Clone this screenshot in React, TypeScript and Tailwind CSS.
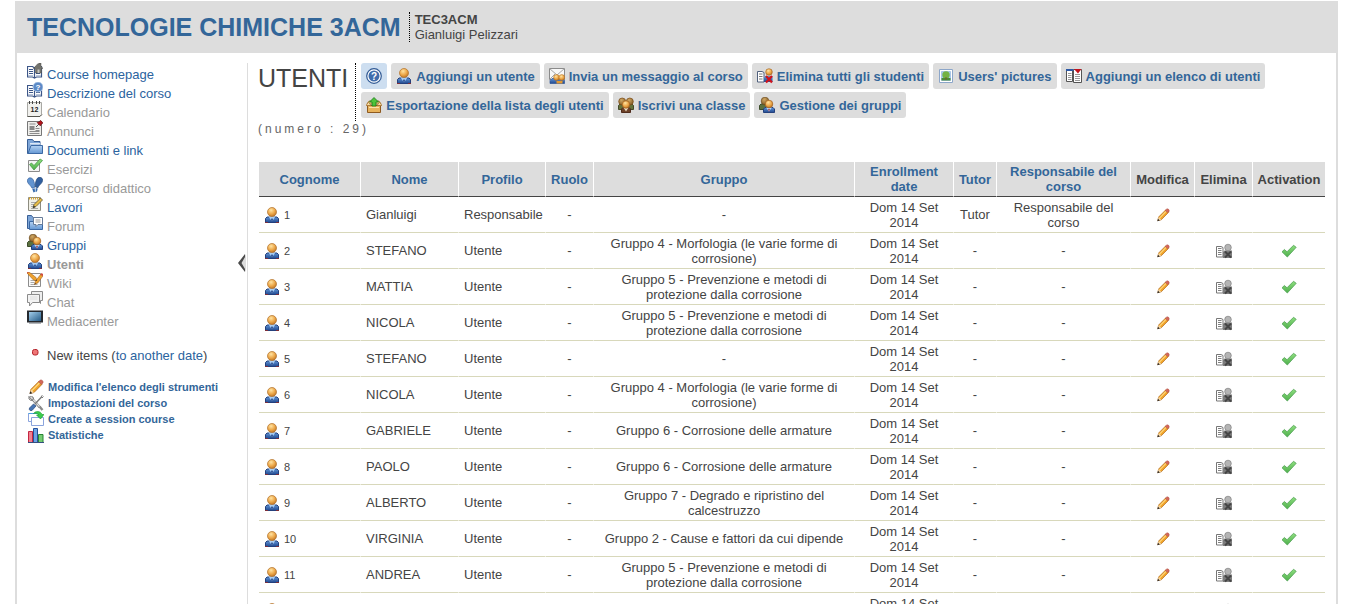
import React from "react";

type IconProps = { className?: string };

function Svg({ children, className = "size-4" }: { children: React.ReactNode; className?: string }) {
  return (
    <svg viewBox="0 0 16 16" className={`${className} shrink-0`} aria-hidden="true">
      {children}
    </svg>
  );
}

function Gradients() {
  return (
    <svg className="absolute size-0" aria-hidden="true">
      <defs>
        <radialGradient id="head" cx="0.4" cy="0.3" r="0.8">
          <stop offset="0" stopColor="#ffe3a1" />
          <stop offset="0.5" stopColor="#eeaa4c" />
          <stop offset="1" stopColor="#b5691c" />
        </radialGradient>
        <radialGradient id="olive" cx="0.4" cy="0.3" r="0.8">
          <stop offset="0" stopColor="#d0a763" />
          <stop offset="1" stopColor="#7a5420" />
        </radialGradient>
        <linearGradient id="coat" x1="0" y1="0" x2="0" y2="1">
          <stop offset="0" stopColor="#5d93d6" />
          <stop offset="1" stopColor="#22498f" />
        </linearGradient>
        <linearGradient id="folder" x1="0" y1="0" x2="0" y2="1">
          <stop offset="0" stopColor="#b5d3f3" />
          <stop offset="1" stopColor="#6497d3" />
        </linearGradient>
        <linearGradient id="screen" x1="0" y1="0" x2="1" y2="1">
          <stop offset="0" stopColor="#a4cfec" />
          <stop offset="1" stopColor="#245a86" />
        </linearGradient>
        <linearGradient id="tick" x1="0" y1="0" x2="0" y2="1">
          <stop offset="0" stopColor="#8ede7e" />
          <stop offset="1" stopColor="#4fb04d" />
        </linearGradient>
      </defs>
    </svg>
  );
}

function UserIcon({ className }: IconProps) {
  return (
    <Svg className={className}>
      <path d="M1.500 15.500v-4l1.500-1.500h10l1.500 1.500v4z" fill="url(#coat)" stroke="#24407c" />
      <path d="M4.500 9.500h7L8 14.500z" fill="#a9cdf2" />
      <path d="M8 11l1 1.500-1 3-1-3z" fill="#27488b" />
      <path d="M1 15.500h3M12 15.500h3" stroke="#7c2f3c" />
      <circle cx="8" cy="5" r="4.500" fill="url(#head)" stroke="#b0702a" strokeWidth="0.700" />
    </Svg>
  );
}

function GroupIcon({ className }: IconProps) {
  return (
    <Svg className={className}>
      <path d="M0.500 12.500v-4l1.500-1.500h7v5.500z" fill="#5b7040" stroke="#3d4d2b" />
      <circle cx="6" cy="4" r="3.800" fill="url(#olive)" stroke="#6c4a1c" strokeWidth="0.700" />
      <path d="M4.500 15.500v-3.500l1.500-1.500h8l1.500 1.500v3.500z" fill="url(#coat)" stroke="#24407c" />
      <path d="M7 10.500h6L10 14.500z" fill="#b9d8f5" />
      <path d="M10 11.500l.7 1-.7 2.500-.7-2.500z" fill="#a32a2f" />
      <circle cx="10" cy="7" r="3.800" fill="url(#head)" stroke="#a0601e" strokeWidth="0.700" />
    </Svg>
  );
}

function ClassIcon() {
  return (
    <Svg>
      <path d="M.5 12.500v-4l1.500-1.500h12l1.500 1.500v4z" fill="#65733c" stroke="#454b2a" />
      <circle cx="4.200" cy="4.500" r="3.500" fill="url(#olive)" stroke="#7b4a16" strokeWidth="0.700" />
      <circle cx="11.800" cy="4.500" r="3.500" fill="url(#olive)" stroke="#7b4a16" strokeWidth="0.700" />
      <path d="M3.500 15.500v-3.500l1.500-1.500h6l1.500 1.500v3.500z" fill="#6d4128" stroke="#502c1c" />
      <path d="M5.500 10.500h5L8 14.500z" fill="#e8d9be" />
      <circle cx="8" cy="7.500" r="3.700" fill="url(#head)" stroke="#a0601e" strokeWidth="0.700" />
    </Svg>
  );
}

function BookPages({ color = "#3c5688" }: { color?: string }) {
  return (
    <>
      <path d="M.5 3.500h5l2 1.500 2-1.500h5v10.500H9.500l-2 1-2-1H.5z" fill="#fff" stroke={color} strokeWidth="1.200" />
      <path d="M7.500 5v10" stroke={color} strokeWidth="1.200" />
      <path d="M2 6.500h4M2 8.500h4M2 10.500h4M9 6.500h4M9 8.500h4M9 10.500h4" stroke={color} />
      <path d="M1 12.500h5M9 12.500h5" stroke="#b9c6dc" />
    </>
  );
}

function HomeBookIcon() {
  return (
    <Svg>
      <BookPages />
      <path d="M6.500 5.500L11 .5l1 .8V0h2v3l2 2.500h-1.500V10H8.500V5.500z" fill="#73736d" stroke="#4f4f4a" strokeWidth="0.500" />
      <path d="M10.500 6.500h2V10h-2z" fill="#c6c6c0" />
    </Svg>
  );
}

function InfoBookIcon() {
  return (
    <Svg>
      <BookPages />
      <circle cx="11" cy="5" r="5" fill="#5c8ac7" stroke="#bcd2ec" strokeWidth="0.800" />
      <text x="11" y="8" textAnchor="middle" fontSize="8" fontWeight="700" fill="#fff" className="font-['Liberation_Sans',sans-serif]">?</text>
    </Svg>
  );
}

function CalendarIcon() {
  return (
    <Svg>
      <path d="M.5 1.500h14v12l-2 2H.5z" fill="#f1f1ee" stroke="#a8a8a4" />
      <path d="M.5 15.500h12.500l2-2" fill="none" stroke="#55554f" />
      <path d="M2.500 0v3M5.500 0v3M9.500 0v3M12.500 0v3" stroke="#444" />
      <text x="7.500" y="11" textAnchor="middle" fontSize="7" fontWeight="700" fill="#222" className="font-['Liberation_Sans',sans-serif]">12</text>
    </Svg>
  );
}

function NewsIcon() {
  return (
    <Svg>
      <path d="M.5 1.500h14v14H.5z" fill="#efefec" stroke="#777" />
      <path d="M2.500 4h6M2.500 13.500h10M8.500 8.500h4M8.500 10.500h4M2.500 11.500h10" stroke="#8c8c8c" />
      <path d="M2.500 6h5v4h-5z" fill="#888" />
      <path d="M9 7l3-3" stroke="#555" />
      <path d="M10 2.500l3.500 3.500.5-1.500L16 3 13.500 .3 12 2z" fill="#b3141c" stroke="#5e0b10" strokeWidth="0.600" />
    </Svg>
  );
}

function FolderIcon() {
  return (
    <Svg>
      <path d="M.5 14.500V.5h5l1.500 2h6v12z" fill="#7ea6d8" stroke="#385f96" />
      <path d="M3 4.500h10M3 6h10" stroke="#dce8f6" />
      <path d="M1 14.500l3-8h11.500v8z" fill="url(#folder)" stroke="#3b69a5" />
    </Svg>
  );
}

function ExerciseIcon() {
  return (
    <Svg>
      <path d="M1.500 2.500h11v11h-11z" fill="#f4f4f4" stroke="#8c8c8c" />
      <path d="M2.500 6.500l2-1.500L7 7.500 13 1l2.500 1.500L7 12z" fill="url(#tick)" stroke="#3c8f38" strokeWidth="0.700" />
    </Svg>
  );
}

function StepsIcon() {
  return (
    <Svg>
      <path d="M.6 2.500C1.500.3 5 .2 6.300 3c1 2.200 1.700 5 1.200 7.500L5 11.200C3.800 8-.6 6.500.6 2.500z" fill="#6194d1" stroke="#3a639f" strokeWidth="0.700" />
      <path d="M15.400 2C14.500-.2 11-.3 9.700 2.300 8.600 4.600 8 7.500 8.400 10l2.500.7C12 7.500 16.500 6 15.400 2z" fill="#315f9f" stroke="#234878" strokeWidth="0.700" />
      <path d="M5.300 12l2.400-.7.300 3.400-1.500.8zM8.700 11l2 .5-.7 3-1.500.5z" fill="#356baf" />
    </Svg>
  );
}

function WorkIcon() {
  return (
    <Svg>
      <path d="M1.500 1.500h12v13h-12z" fill="#f1f0e6" stroke="#8d8c80" />
      <path d="M2 2.500h11" stroke="#dca62d" strokeWidth="2" strokeDasharray="1 1" />
      <path d="M4 6.500h6M4 8.500h4M4 10.500h3M4 12.500h7" stroke="#aaa" />
      <path d="M6 12l1-3.500L13.500 2l2 2L9 10.500z" fill="#e8bd47" stroke="#5f5634" strokeWidth="0.800" />
      <path d="M6 12l.7-2.400L8.500 11z" fill="#333" />
    </Svg>
  );
}

function ForumIcon() {
  return (
    <Svg>
      <path d="M.5 13.500V.5h4l1.500 2h6v11z" fill="#7ea6d8" stroke="#385f96" />
      <path d="M2.500 14.500v-8h13v8z" fill="url(#folder)" stroke="#3b69a5" />
      <path d="M6.500 2.500h9v7H11l-2 2v-2H6.500z" fill="#fff" stroke="#667b98" />
      <path d="M8.500 5h5M8.500 7h5" stroke="#999" />
    </Svg>
  );
}

function PencilIcon({ className }: IconProps) {
  return (
    <Svg className={className}>
      <path d="M2 14.500l1-4.200L11.300 2l3 3L6 13.500z" fill="#f2a52a" stroke="#ad661a" strokeWidth="0.800" />
      <path d="M4 11.500L12.300 3" stroke="#ffda81" strokeWidth="1.200" />
      <path d="M2 14.500l1-4.200L6 13.500z" fill="#f3d6a6" />
      <path d="M1.500 15l.8-2.700 2 1.900z" fill="#2a2a2a" />
      <path d="M10.500 2.800l1.800-1.700c1.500-.7 3.300 1.100 2.700 2.600L13.300 5.500z" fill="#d3685b" stroke="#a5473f" strokeWidth="0.500" />
    </Svg>
  );
}

function WikiIcon() {
  return (
    <Svg>
      <path d="M1.500 1.500h12v13h-12z" fill="#fafafa" stroke="#8c8c8c" />
      <path d="M3.500 8.500h5M3.500 10.500h4M3.500 12.500h7" stroke="#aaa" />
      <path d="M0 1l2-1L9 5.500 10 9 6.500 8z" fill="#eea32f" stroke="#a96016" strokeWidth="0.600" />
      <path d="M7.500 12.500l1-3.500L14 2l2 1.800-5 7z" fill="#eea32f" stroke="#a96016" strokeWidth="0.600" />
      <path d="M13.300 3L14.500 1 16 2v2zM0 0h2L.5 1.500z" fill="#cf4c40" />
      <path d="M10 9L8.300 8.500l1.200-1zM7.500 12.500l.5-1.600 1 .6z" fill="#333" />
    </Svg>
  );
}

function ChatIcon() {
  return (
    <Svg>
      <path d="M4.500 .5h11v9h-2v3l-3-3h-6z" fill="#eee" stroke="#8b8b8b" />
      <path d="M.5 3.500h12v8H5.500l-3 3.500v-3.500h-2z" fill="#f3f3f3" stroke="#8b8b8b" />
      <path d="M3 6h7.500M3 8h7.500" stroke="#ddd" />
    </Svg>
  );
}

function MediaIcon() {
  return (
    <Svg>
      <path d="M0 .5h16v12H0z" fill="#25292e" />
      <path d="M2 2h12v9H2z" fill="url(#screen)" />
      <path d="M2 13h12" stroke="#6a7078" />
    </Svg>
  );
}

function ToolsIcon() {
  return (
    <Svg>
      <path d="M2 1.500l10 11" stroke="#6f6f6f" strokeWidth="2.600" />
      <path d="M2.500 1.800l10 11" stroke="#e2e2e2" strokeWidth="1.300" />
      <path d="M1 1v3l2 1.500 2-.7L5.500 3 4 1.200" fill="none" stroke="#777" />
      <path d="M11.500 11.500l3 3.500" stroke="#8b8b8b" strokeWidth="2.400" />
      <path d="M7 9l7-7.500" stroke="#777" strokeWidth="1.400" />
      <path d="M13 1.500l1.500-1M14 3l1.500-1.500" stroke="#777" />
      <path d="M1.500 13L5.500 9 8 11l-4 4.500c-1.500.5-3.500-.5-2.500-2.500z" fill="#4574b4" stroke="#244475" strokeWidth="0.700" />
    </Svg>
  );
}

function SessionIcon() {
  return (
    <Svg>
      <path d="M.5 2.500h10v8H.5z" fill="#fff" stroke="#8ba4dd" />
      <path d="M3.500 6.500h12v8h-12z" fill="#fff" stroke="#8ba4dd" />
      <path d="M.5 2.500h10" stroke="#4b9fe0" />
      <path d="M5.500 2.500C7.500-.3 12.500-.5 14 3.500h2L12.500 8 8.500 4h2.200C9.500 2.300 7.500 2 5.500 2.500z" fill="#3bcc4c" stroke="#1d9b33" strokeWidth="0.600" />
    </Svg>
  );
}

function StatsIcon() {
  return (
    <Svg>
      <path d="M.5 4.500h4v11h-4z" fill="#ef8190" stroke="#c42742" />
      <path d="M5.500 1.500h4v14h-4z" fill="#6da3e4" stroke="#24519b" />
      <path d="M10.500 7.500h4.500v8h-4.500z" fill="#75cc72" stroke="#288434" />
      <path d="M0 15.500h16" stroke="#354e80" />
    </Svg>
  );
}

function HelpIcon() {
  return (
    <Svg>
      <circle cx="8" cy="8" r="7.300" fill="#fff" stroke="#315a95" strokeWidth="1.200" />
      <circle cx="8" cy="8" r="5.500" fill="#3f6cab" />
      <text x="8" y="11.500" textAnchor="middle" fontSize="10" fontWeight="700" fill="#fff" className="font-['Liberation_Sans',sans-serif]">?</text>
    </Svg>
  );
}

function MessageIcon() {
  return (
    <Svg>
      <path d="M.5 .5h15v11H.5z" fill="#f8f8f8" stroke="#8b8b8b" />
      <path d="M.5 .5L8 7l7.500-6.500M.5 11.500L6 6" fill="none" stroke="#a5a5a5" />
      <path d="M1 15.500v-3l2-2h11l1.500 2v3z" fill="url(#coat)" stroke="#2d5596" strokeWidth="0.700" />
      <circle cx="7.500" cy="9.500" r="2.900" fill="url(#head)" stroke="#b06c1e" strokeWidth="0.500" />
      <circle cx="12.800" cy="9.500" r="2.900" fill="url(#head)" stroke="#b06c1e" strokeWidth="0.500" />
      <path d="M7.500 13h6v2.500h-6z" fill="#e59a30" />
    </Svg>
  );
}

function UnsubscribeIcon() {
  return (
    <Svg>
      <path d="M.5 3.500h4.500l2 1V14H.5z" fill="#fff" stroke="#50607c" />
      <path d="M2 6h3.500M2 8.500h3.500M2 11h3.500" stroke="#777" />
      <path d="M7 14V9.500l1.500-1.500h7v6z" fill="url(#coat)" />
      <circle cx="12" cy="4" r="3.300" fill="url(#head)" stroke="#a0601e" strokeWidth="0.600" />
      <path d="M9 8l6 6.500M15 8l-6 6.500" stroke="#d0111b" strokeWidth="2.200" />
    </Svg>
  );
}

function UnsubscribeGrayIcon() {
  return (
    <Svg>
      <path d="M.5 3.500h4.500l2 1V14H.5z" fill="#fff" stroke="#777" />
      <path d="M2 5.500h3.500M2 7.500h3.500M2 9.500h3.500M2 11.500h3.500" stroke="#808080" />
      <path d="M7 15V9l1.500-1.500H16V15z" fill="#7d7d7d" />
      <circle cx="12" cy="4.500" r="3.300" fill="#b4b4b4" stroke="#808080" strokeWidth="0.700" />
      <path d="M9 8.500l6 6M15 8.500l-6 6" stroke="#454545" strokeWidth="2" />
    </Svg>
  );
}

function PictureIcon() {
  return (
    <Svg>
      <path d="M1.500 1.500h13v13h-13z" fill="#fff" stroke="#8ca6c9" />
      <path d="M3.500 3.500h9v9h-9z" fill="#a9cdf0" stroke="#8aaedb" strokeWidth="0.600" />
      <circle cx="8" cy="7" r="3.700" fill="#74b244" />
      <path d="M3.500 12.500V10h9v2.500z" fill="#4e8c39" />
      <path d="M7.500 9h1v2.500h-1z" fill="#7d5a2c" />
    </Svg>
  );
}

function ImportListIcon() {
  return (
    <Svg>
      <path d="M.5 1.500h6v12h-6zM7.500 1.500h8v13h-8z" fill="#fff" stroke="#555" />
      <path d="M0 2h7.500" stroke="#2c58a5" strokeWidth="2" />
      <path d="M2 5.500h3.500M2 7.500h3.500M2 9.500h3.500M2 11.500h3.500M9 6.500h5M9 8.500h5M9 10.500h5M9 12.500h5" stroke="#999" />
      <path d="M8 1h7.500L12 5.500z" fill="#c3121c" />
    </Svg>
  );
}

function ExportIcon() {
  return (
    <Svg>
      <path d="M1 7L3 4h10l2 3z" fill="#f3d188" stroke="#a16c28" strokeWidth="0.800" />
      <path d="M1.500 8.500h13v7h-13z" fill="#e8b35c" stroke="#8e5a20" />
      <path d="M0 8.500L2.500 5 5 8.500zM16 8.500L13.500 5 11 8.500z" fill="#f9dfa3" stroke="#a16c28" strokeWidth="0.700" />
      <path d="M3 10.500h10" stroke="#fbe2ae" />
      <path d="M8 .5l4.500 4.500H10v4H6V5H3.500z" fill="#4fc43a" stroke="#1b7a1b" strokeWidth="0.800" />
    </Svg>
  );
}

function CheckIcon() {
  return (
    <Svg>
      <path d="M1 8.800l2.400-2.300L6 8.800l6.500-6.500L15.200 4.300 6.300 14z" fill="url(#tick)" stroke="#52a257" strokeWidth="0.800" />
    </Svg>
  );
}

const tools = [
  { label: "Course homepage", icon: HomeBookIcon, tone: "text-[#2b639e]" },
  { label: "Descrizione del corso", icon: InfoBookIcon, tone: "text-[#2b639e]" },
  { label: "Calendario", icon: CalendarIcon, tone: "text-[#999]" },
  { label: "Annunci", icon: NewsIcon, tone: "text-[#999]" },
  { label: "Documenti e link", icon: FolderIcon, tone: "text-[#2b639e]" },
  { label: "Esercizi", icon: ExerciseIcon, tone: "text-[#999]" },
  { label: "Percorso didattico", icon: StepsIcon, tone: "text-[#999]" },
  { label: "Lavori", icon: WorkIcon, tone: "text-[#2b639e]" },
  { label: "Forum", icon: ForumIcon, tone: "text-[#999]" },
  { label: "Gruppi", icon: GroupIcon, tone: "text-[#2b639e]" },
  { label: "Utenti", icon: UserIcon, tone: "font-bold text-[#999]" },
  { label: "Wiki", icon: WikiIcon, tone: "text-[#999]" },
  { label: "Chat", icon: ChatIcon, tone: "text-[#999]" },
  { label: "Mediacenter", icon: MediaIcon, tone: "text-[#999]" },
];

const adminLinks = [
  { label: "Modifica l'elenco degli strumenti", icon: PencilIcon },
  { label: "Impostazioni del corso", icon: ToolsIcon },
  { label: "Create a session course", icon: SessionIcon },
  { label: "Statistiche", icon: StatsIcon },
];

const commands = [
  { label: "Aggiungi un utente", icon: UserIcon },
  { label: "Invia un messaggio al corso", icon: MessageIcon },
  { label: "Elimina tutti gli studenti", icon: UnsubscribeIcon },
  { label: "Users' pictures", icon: PictureIcon },
  { label: "Aggiungi un elenco di utenti", icon: ImportListIcon },
  { label: "Esportazione della lista degli utenti", icon: ExportIcon },
  { label: "Iscrivi una classe", icon: ClassIcon },
  { label: "Gestione dei gruppi", icon: GroupIcon },
];

const columns = [
  { label: "Cognome", width: "w-[102px]", sortable: true },
  { label: "Nome", width: "w-[98px]", sortable: true },
  { label: "Profilo", width: "w-[87px]", sortable: true },
  { label: "Ruolo", width: "w-12", sortable: true },
  { label: "Gruppo", width: "", sortable: true },
  { label: "Enrollment date", width: "w-[99px]", sortable: true },
  { label: "Tutor", width: "w-[43px]", sortable: true },
  { label: "Responsabile del corso", width: "w-[134px]", sortable: true },
  { label: "Modifica", width: "w-16", sortable: false },
  { label: "Elimina", width: "w-[58px]", sortable: false },
  { label: "Activation", width: "w-[72px]", sortable: false },
];

const G2 = "Gruppo 2 - Cause e fattori da cui dipende";
const G4 = "Gruppo 4 - Morfologia (le varie forme di corrosione)";
const G5 = "Gruppo 5 - Prevenzione e metodi di protezione dalla corrosione";
const G6 = "Gruppo 6 - Corrosione delle armature";
const G7 = "Gruppo 7 - Degrado e ripristino del calcestruzzo";

const users = [
  { name: "Gianluigi", group: "-", manager: true },
  { name: "STEFANO", group: G4, manager: false },
  { name: "MATTIA", group: G5, manager: false },
  { name: "NICOLA", group: G5, manager: false },
  { name: "STEFANO", group: "-", manager: false },
  { name: "NICOLA", group: G4, manager: false },
  { name: "GABRIELE", group: G6, manager: false },
  { name: "PAOLO", group: G6, manager: false },
  { name: "ALBERTO", group: G7, manager: false },
  { name: "VIRGINIA", group: G2, manager: false },
  { name: "ANDREA", group: G5, manager: false },
  { name: "", group: "", manager: false },
];

function Sidebar() {
  return (
    <aside className="relative w-[231px] shrink-0 border-r border-[#ddd] pl-[10px]">
      <nav aria-label="Strumenti">
        <ul>
          {tools.map(({ label, icon: Icon, tone }) => (
            <li key={label}>
              <a href="#" className={`flex h-[19px] items-start gap-1 ${tone}`}>
                <Icon />
                <span className="self-end">{label}</span>
              </a>
            </li>
          ))}
        </ul>
      </nav>
      <p className="mt-[19px] flex items-start gap-1">
        <svg viewBox="0 0 16 16" className="size-4 shrink-0" aria-hidden="true">
          <rect x="5.500" y="1.500" width="5.500" height="5.500" rx="2" fill="#ef7676" stroke="#b5242c" />
        </svg>
        <span>
          New items (<a href="#" className="text-[#2b639e]">to another date</a>)
        </span>
      </p>
      <ul className="mt-[15px] text-[11px] leading-4 font-bold text-[#336699]">
        {adminLinks.map(({ label, icon: Icon }) => (
          <li key={label}>
            <a href="#" className="flex items-center gap-1 pl-px">
              <Icon />
              {label}
            </a>
          </li>
        ))}
      </ul>
      <button type="button" aria-label="Nascondi menu" className="absolute top-[190px] right-0">
        <svg viewBox="0 0 10 20" className="h-5 w-[10px]" aria-hidden="true">
          <path d="M9 1v18L2 10z" fill="#ddd" />
          <path d="M8 1L1 10l7 9v-3L4.500 10 8 4z" fill="#4a4a4a" />
        </svg>
      </button>
    </aside>
  );
}

function UsersTable() {
  const cell = "border-r border-b border-r-white border-b-[#d8d8bb] px-[5px] last:border-r-0";
  return (
    <div className="mt-6 pl-px">
      <table className="w-full table-fixed border-separate border-spacing-0 text-center">
        <thead>
          <tr className="h-[35px]">
            {columns.map(({ label, width, sortable }) => (
              <th
                key={label}
                scope="col"
                className={`${width} border-r border-b border-r-white border-b-[#444] bg-[#ddd] last:border-r-0`}
              >
                {sortable ? <a href="#" className="block text-[#336699]">{label}</a> : label}
              </th>
            ))}
          </tr>
        </thead>
        <tbody>
          {users.map(({ name, group, manager }, i) => (
            <tr key={i} className="h-9">
              <td className={cell}>
                <div className="flex items-end gap-1 text-[11px]">
                  <UserIcon />
                  {i + 1}
                </div>
              </td>
              <td className={`${cell} text-left`}>{name}</td>
              <td className={`${cell} text-left`}>{manager ? "Responsabile" : "Utente"}</td>
              <td className={cell}>-</td>
              <td className={cell}>{group}</td>
              <td className={cell}>Dom 14 Set 2014</td>
              <td className={`${cell} px-0`}>{manager ? "Tutor" : "-"}</td>
              <td className={cell}>{manager ? "Responsabile del corso" : "-"}</td>
              <td className={cell}>
                <a href="#" aria-label="Modifica" className="flex justify-center">
                  <PencilIcon className="size-[14px]" />
                </a>
              </td>
              <td className={cell}>
                {!manager && (
                  <a href="#" aria-label="Elimina" className="flex justify-center">
                    <UnsubscribeGrayIcon />
                  </a>
                )}
              </td>
              <td className={cell}>
                {!manager && (
                  <a href="#" aria-label="Disattiva" className="flex justify-center">
                    <CheckIcon />
                  </a>
                )}
              </td>
            </tr>
          ))}
        </tbody>
      </table>
    </div>
  );
}

export default function App() {
  return (
    <div className="h-screen overflow-hidden bg-white px-[15px] pt-px font-['Liberation_Sans',Arial,sans-serif] text-[13px] leading-[15px] text-[#444]">
      <Gradients />
      <div className="min-h-full border-x-2 border-[#ddd]">
        <header className="flex h-[52px] items-center bg-[#ddd] pl-[10px]">
          <h1 className="text-[25px] leading-[30px] font-bold text-[#336699]">
            <a href="#">TECNOLOGIE CHIMICHE 3ACM</a>
          </h1>
          <div className="ml-2 border-l border-dotted border-black pl-[5px]">
            <p className="font-bold">TEC3ACM</p>
            <p>Gianluigi Pelizzari</p>
          </div>
        </header>
        <div className="flex min-h-screen pt-[10px]">
          <Sidebar />
          <main className="min-w-0 flex-1 pr-[11px] pl-[10px]">
            <div className="flex">
              <h2 className="h-[58px] shrink-0 border-r border-dotted border-black pr-[7px] text-[25px] leading-[30px]">
                UTENTI
              </h2>
              <ul className="flex flex-wrap content-start gap-x-1 gap-y-[3px] pl-[5px] font-bold text-[#336699]">
                <li>
                  <a href="#" aria-label="Aiuto" className="flex h-[26px] items-center rounded-[3px] bg-[#cddef0] px-[5px]">
                    <HelpIcon />
                  </a>
                </li>
                {commands.map(({ label, icon: Icon }) => (
                  <li key={label}>
                    <a href="#" className="flex h-[26px] items-center gap-1 rounded-[3px] bg-[#ddd] px-[5px] whitespace-nowrap">
                      <Icon />
                      {label}
                    </a>
                  </li>
                ))}
              </ul>
            </div>
            <p className="text-xs leading-[17px] tracking-[3px] text-[#666]">(numero : 29)</p>
            <UsersTable />
          </main>
        </div>
      </div>
    </div>
  );
}
